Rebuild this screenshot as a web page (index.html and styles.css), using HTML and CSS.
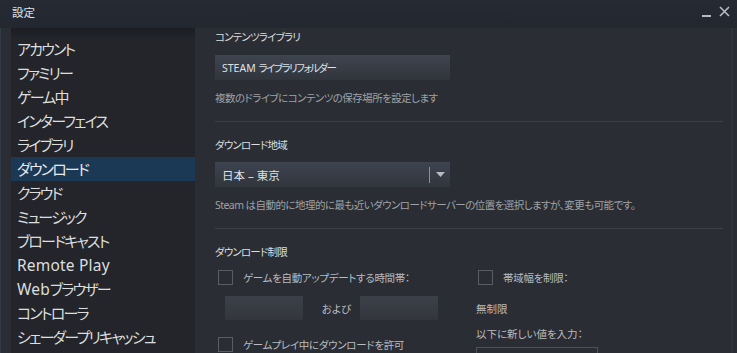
FILE: index.html
```html
<html>
  <head>
    <meta charset="utf-8">
    <link rel="stylesheet" href="styles.css">
  </head>
  <body>
    <div class="titlebar">
      <span class="title">設定</span>
      <div class="win-controls">
        <svg width="10" height="10" viewBox="0 0 10 10"><rect x="0" y="8" width="9" height="2" fill="#b8bcc2"/></svg>
        <svg width="11" height="11" viewBox="0 0 11 11"><path d="M1 1 L10 10 M10 1 L1 10" stroke="#b8bcc2" stroke-width="1.6"/></svg>
      </div>
    </div>

    <div class="window">
      <div class="sidebar">
        <div class="sidebar-top"></div>
        <div class="nav-item">アカウント</div>
        <div class="nav-item">ファミリー</div>
        <div class="nav-item">ゲーム中</div>
        <div class="nav-item">インターフェイス</div>
        <div class="nav-item">ライブラリ</div>
        <div class="nav-item selected">ダウンロード</div>
        <div class="nav-item">クラウド</div>
        <div class="nav-item">ミュージック</div>
        <div class="nav-item">ブロードキャスト</div>
        <div class="nav-item"><span class="latin">Remote Play</span></div>
        <div class="nav-item"><span class="latin">Web</span>ブラウザー</div>
        <div class="nav-item">コントローラ</div>
        <div class="nav-item">シェーダープリキャッシュ</div>
      </div>

      <div class="content">
        <div class="section-title first">コンテンツライブラリ</div>
        <div class="btn"><span class="latin">STEAM </span>ライブラリフォルダー</div>
        <div class="desc">複数のドライブにコンテンツの保存場所を設定します</div>
        <div class="divider"></div>

        <div class="section-title">ダウンロード地域</div>
        <div class="dropdown">
          <span>日本 – 東京</span>
          <div class="dropdown-arrow">
            <svg width="9" height="5" viewBox="0 0 9 5"><path d="M0 0 H9 L4.5 5 Z" fill="#b8bcc2"/></svg>
          </div>
        </div>
        <div class="desc">Steam は自動的に地理的に最も近いダウンロードサーバーの位置を選択しますが、変更も可能です。</div>
        <div class="divider"></div>

        <div class="section-title">ダウンロード制限</div>
        <div class="limits">
          <div class="limit-col">
            <div class="check-row left"><span class="checkbox"></span><span class="check-label">ゲームを自動アップデートする時間帯：</span></div>
            <div class="time-row">
              <div class="field"></div>
              <span class="and">および</span>
              <div class="field"></div>
            </div>
            <div class="check-row left second"><span class="checkbox"></span><span class="check-label">ゲームプレイ中にダウンロードを許可</span></div>
          </div>
          <div class="limit-col">
            <div class="check-row right"><span class="checkbox"></span><span class="check-label">帯域幅を制限：</span></div>
            <div class="plain">無制限</div>
            <div class="plain next">以下に新しい値を入力：</div>
            <div class="value-box"></div>
          </div>
        </div>
      </div>

      <div class="scrollbar"></div>
    </div>
  </body>
</html>
```

FILE: styles.css
```css
body {
  margin: 0;
  width: 737px;
  height: 353px;
  overflow: hidden;
  background-color: #2a2d33;
  color: #dcdedf;
  font-family: "Noto Sans", "Noto Sans CJK JP", sans-serif;
  font-feature-settings: "palt";
  box-shadow: inset 1px 0 0 #323a48;
}

.titlebar {
  height: 28px;
  display: flex;
  justify-content: space-between;
  align-items: center;
  padding: 0 7px 0 12px;
  background: linear-gradient(#252a33, #23272f);
}

.title {
  font-size: 11.5px;
  color: #e0e2e4;
  line-height: 16px;
  margin-top: -2px;
}

.win-controls {
  display: flex;
  gap: 7px;
  align-items: flex-end;
  margin-top: -6px;
}

.window {
  display: flex;
  height: 325px;
}

.sidebar {
  width: 184px;
  margin-left: 11px;
  background-color: #23252a;
}

.sidebar-top {
  height: 9px;
  background: linear-gradient(#1b1d22, #202329);
}

.nav-item {
  height: 24px;
  line-height: 24px;
  padding-left: 6px;
  font-size: 15px;
  letter-spacing: -1.8px;
  color: #dcdedf;
  white-space: nowrap;
}

.nav-item .latin {
  font-size: 15.5px;
  letter-spacing: 0.2px;
}

.nav-item.selected {
  background-color: #1b3855;
  color: #e8eaec;
}

.content {
  flex: 1;
  padding: 0 8px 0 20px;
}

.section-title {
  font-size: 10.5px;
  line-height: 16px;
  margin-top: 15px;
  letter-spacing: -0.8px;
  color: #dcdedf;
}

.section-title.first {
  margin-top: 1px;
}

.btn, .dropdown {
  width: 235px;
  height: 25px;
  box-sizing: border-box;
  margin-top: 10px;
  padding-left: 7px;
  display: flex;
  align-items: center;
  font-size: 10.5px;
  letter-spacing: -1.5px;
  color: #dfe1e3;
  background: linear-gradient(#3e4450, #31353c);
  white-space: pre;
}

.btn .latin {
  letter-spacing: 0;
}

.dropdown {
  margin-top: 9px;
  justify-content: space-between;
  font-size: 11.5px;
  letter-spacing: 0;
  padding-left: 7px;
}

.dropdown-arrow {
  height: 16px;
  width: 20px;
  border-left: 1px solid #8d9196;
  display: flex;
  align-items: center;
  justify-content: center;
}

.desc {
  font-size: 10.5px;
  line-height: 16px;
  margin-top: 10px;
  letter-spacing: -0.55px;
  color: #9ea2a8;
  white-space: nowrap;
}

.divider {
  height: 1px;
  margin-top: 15px;
  background-color: #3d4046;
}

.limits {
  display: grid;
  grid-template-columns: 261px 1fr;
}

.check-row {
  display: flex;
  align-items: center;
  margin-top: 10px;
  height: 15px;
}

.check-row.left {
  padding-left: 3px;
}

.check-row.right {
  padding-left: 2px;
}

.check-row.second {
  margin-top: 17px;
}

.checkbox {
  width: 13px;
  height: 13px;
  border: 1px solid #595d64;
  flex-shrink: 0;
}

.check-label {
  font-size: 10.5px;
  color: #b8bcc1;
  margin-left: 10px;
  letter-spacing: -0.3px;
  white-space: nowrap;
}

.time-row {
  display: flex;
  align-items: center;
  margin-top: 11px;
  padding-left: 10px;
}

.field {
  width: 78px;
  height: 24px;
  background: linear-gradient(#3c4048, #33363d);
}

.and {
  width: 57px;
  box-sizing: border-box;
  padding-left: 10px;
  text-align: center;
  font-size: 10.5px;
  color: #b8bcc1;
}

.plain {
  font-size: 10.5px;
  line-height: 16px;
  margin-top: 16px;
  color: #b8bcc1;
}

.plain.next {
  margin-top: 9px;
}

.value-box {
  width: 122px;
  height: 20px;
  margin-top: 5px;
  border: 1px solid #4c5059;
  box-sizing: border-box;
}

.scrollbar {
  width: 2px;
  margin-right: 4px;
  background-color: #30333a;
}
```
